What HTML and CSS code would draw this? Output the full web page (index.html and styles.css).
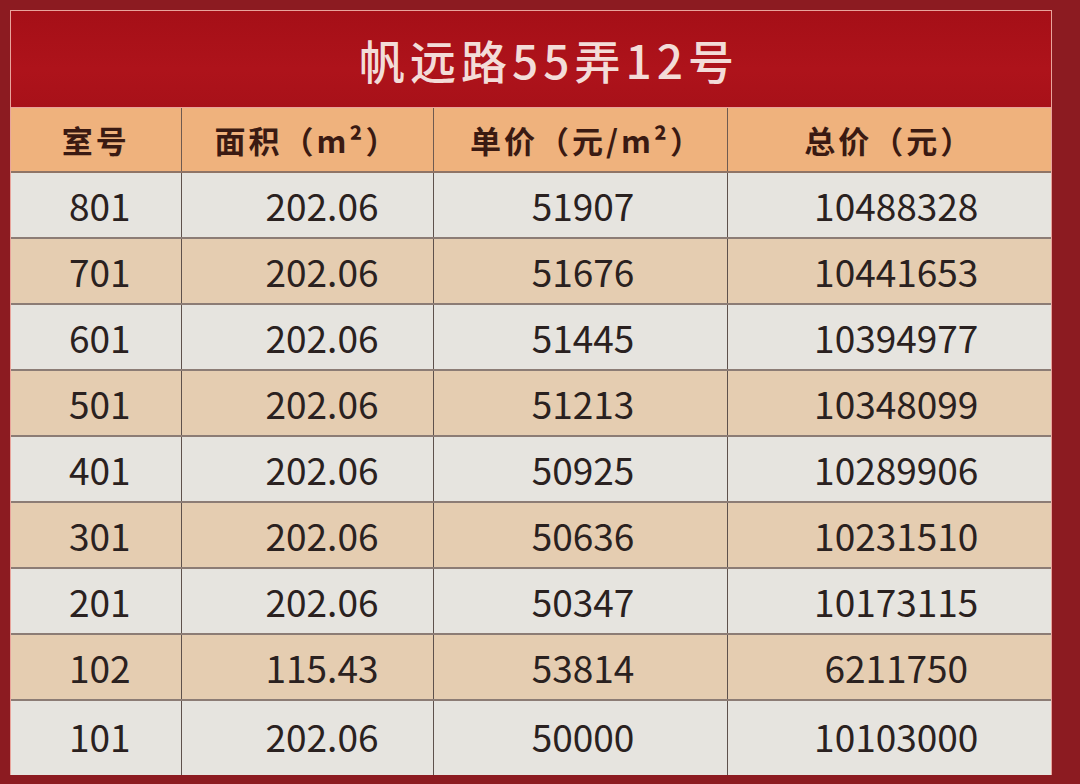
FILE: index.html
```html
<!DOCTYPE html>
<html lang="zh">
<head>
<meta charset="utf-8">
<title>帆远路55弄12号</title>
<link rel="stylesheet" href="styles.css">
</head>
<body>
<div class="board">
  <div class="title">帆远路55弄12号</div>
  <table class="prices">
    <colgroup>
      <col class="c1"><col class="c2"><col class="c3"><col class="c4">
    </colgroup>
    <thead>
      <tr><th>室号</th><th>面积（m²）</th><th>单价（元/m²）</th><th>总价（元）</th></tr>
    </thead>
    <tbody>
      <tr class="light"><td>801</td><td>202.06</td><td>51907</td><td>10488328</td></tr>
      <tr class="tan"><td>701</td><td>202.06</td><td>51676</td><td>10441653</td></tr>
      <tr class="light"><td>601</td><td>202.06</td><td>51445</td><td>10394977</td></tr>
      <tr class="tan"><td>501</td><td>202.06</td><td>51213</td><td>10348099</td></tr>
      <tr class="light"><td>401</td><td>202.06</td><td>50925</td><td>10289906</td></tr>
      <tr class="tan"><td>301</td><td>202.06</td><td>50636</td><td>10231510</td></tr>
      <tr class="light"><td>201</td><td>202.06</td><td>50347</td><td>10173115</td></tr>
      <tr class="tan"><td>102</td><td>115.43</td><td>53814</td><td>6211750</td></tr>
      <tr class="light"><td>101</td><td>202.06</td><td>50000</td><td>10103000</td></tr>
    </tbody>
  </table>
</div>
</body>
</html>
```
FILE: styles.css
```css
html, body {
  margin: 0;
  padding: 0;
}
body {
  width: 1080px;
  height: 784px;
  overflow: hidden;
  background: #8c1b21;
  font-family: "Noto Sans CJK SC", "Noto Sans", sans-serif;
}
.board {
  margin: 10px 0 0 10px;
  width: 1040px;
  border: 1px solid #e9a39b;
  border-bottom: none;
  background: #b0141b;
}
.title {
  height: 96px;
  display: flex;
  align-items: center;
  justify-content: center;
  color: #f3dcd8;
  font-size: 46px;
  font-weight: 500;
  letter-spacing: 5px;
  padding-left: 36px;
  box-sizing: border-box;
  background: linear-gradient(180deg, #a50f17 0%, #ae131b 60%, #a81119 100%);
}
.prices {
  width: 1040px;
  border-collapse: collapse;
  table-layout: fixed;
}
.c1 { width: 170px; }
.c2 { width: 252px; }
.c3 { width: 294px; }
.c4 { width: 324px; }
.prices th {
  height: 63px;
  background: #efb27d;
  color: #3a1a12;
  font-size: 31px;
  font-weight: 700;
  letter-spacing: 3px;
  border-top: 1px solid #e9a39b;
  border-bottom: 2px solid #8f7466;
  border-left: 1px solid #6f5a50;
  padding: 0;
}
.prices th:nth-child(3) { padding-left: 14px; }
.prices th:first-child,
.prices td:first-child {
  border-left: none;
}
.prices td {
  height: 64px;
  padding: 0;
  text-align: center;
  color: #2a2120;
  font-size: 37px;
  font-weight: 400;
  border-bottom: 2px solid #8c7c75;
  border-left: 1px solid #5e514c;
}
.prices tr:last-child td {
  border-bottom: none;
  height: 70px;
  padding-bottom: 4px;
}
.light td {
  background: #e6e4df;
}
.tan td {
  background: #e5cdb1;
}
.prices td:nth-child(1) { padding-left: 8px; }
.prices td:nth-child(2) { padding-left: 30px; }
.prices td:nth-child(3) { padding-left: 6px; }
.prices td:nth-child(4) { padding-left: 14px; }
```
